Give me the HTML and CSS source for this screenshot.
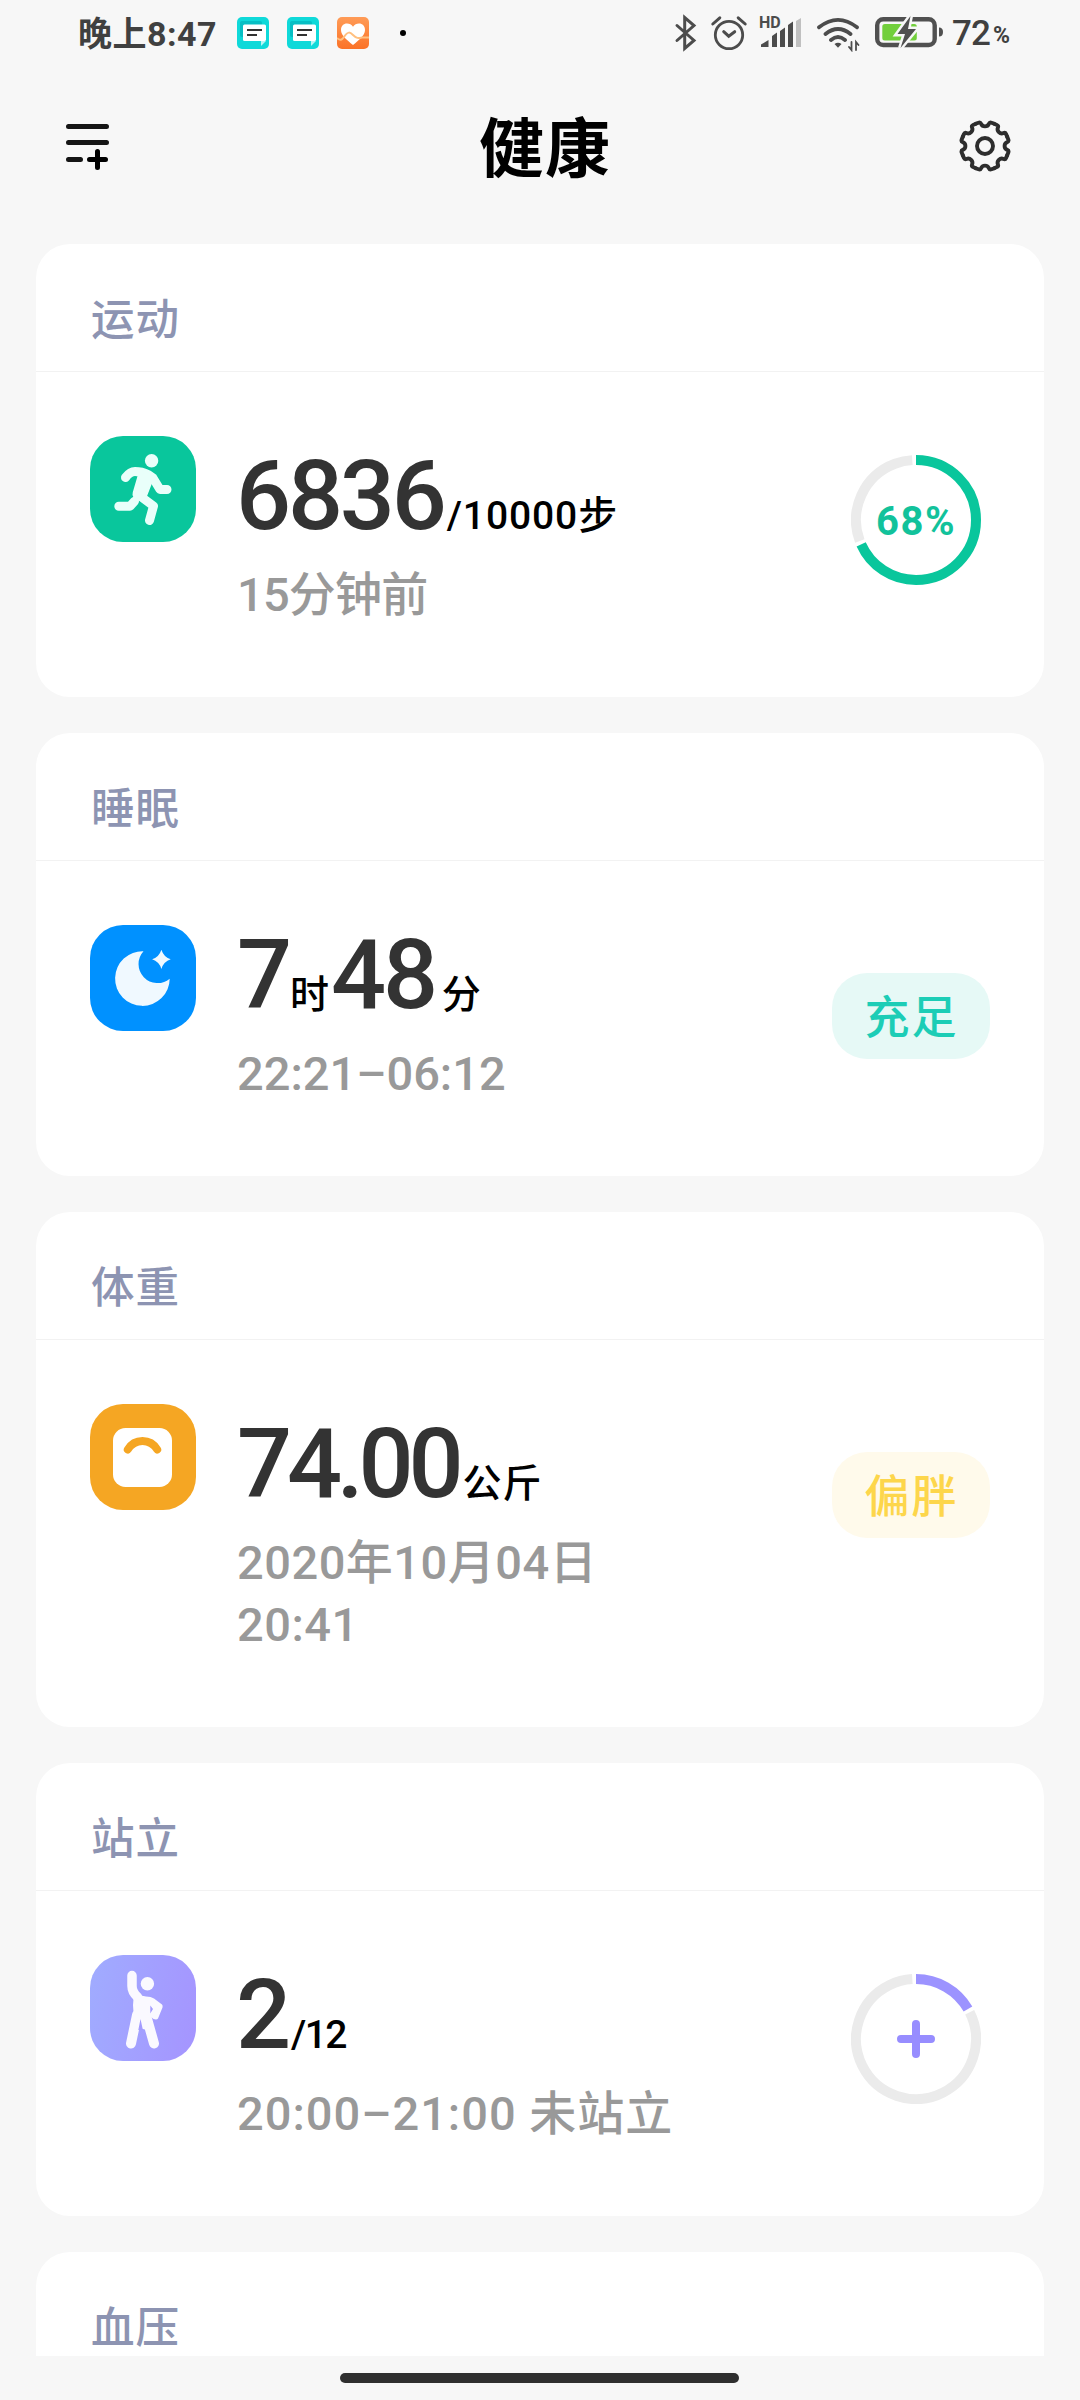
FILE: index.html
```html
<!DOCTYPE html>
<html lang="zh-CN">
<head>
<meta charset="utf-8">
<title>健康</title>
<link rel="stylesheet" href="styles.css">
</head>
<body>
<svg class="defs" width="0" height="0">
  <defs>
    <symbol id="message" viewBox="0 0 32 32">
      <rect width="32" height="32" rx="5" fill="#0fd9d9"/>
      <rect x="3" y="4" width="22" height="16" rx="2" fill="#07bfc4"/>
      <path d="M24 24h5l-5 5z" fill="#b8f4f4"/>
      <rect x="6" y="7.500" width="23" height="16.500" rx="1.500" fill="#fff"/>
      <path d="M10 13h15M10 18h10" stroke="#333" stroke-width="2"/>
    </symbol>
    <path id="tooth" d="M-9.200-22.200-6.500-23.300Q-4.700-24-3.900-22.200-2.900-19.600 0-19.600 2.900-19.600 3.900-22.200 4.700-24 6.500-23.300L9.200-22.200"/>
  </defs>
</svg>
<div class="screen">
  <div class="status">
    <span class="time">晚上8:47</span>
    <span class="notices">
      <svg width="32" height="32"><use href="#message"/></svg>
      <svg width="32" height="32"><use href="#message"/></svg>
      <svg width="32" height="32" viewBox="0 0 32 32">
        <defs><linearGradient id="orange" x2="0" y2="1"><stop stop-color="#ff9b57"/><stop offset="1" stop-color="#fb7227"/></linearGradient></defs>
        <rect width="32" height="32" rx="5" fill="url(#orange)"/>
        <path d="M16 28C10 23 4 18.500 4 13c0-4 2.500-6.500 6-6.500 2.500 0 4.500 1 6 3.200 1.500-2.200 3.500-3.200 6-3.200 3.500 0 6 2.500 6 6.500 0 5.500-6 10-12 15z" fill="#fff"/>
        <path d="M0 21c3 3 5 2 7-1 4-6 6-5 9-2 4 4 6 3 9 2.500h7" fill="none" stroke="#ffc080" stroke-width="2"/>
      </svg>
    </span>
    <span class="dot"></span>
    <span class="system">
      <svg width="24" height="38" viewBox="0 0 24 38"><path d="M3 11.500 20 26.500 10.700 34.500V3.500L20 11.500 3 26.500" fill="none" stroke="#4c4c4c" stroke-width="3" stroke-linecap="round"/></svg>
      <svg class="alarm" width="40" height="38" viewBox="0 0 40 38" fill="none" stroke="#4c4c4c" stroke-width="2.800" stroke-linecap="round"><circle cx="20" cy="21" r="13.700"/><path d="m14.700 17.700 5 4.500 6-4.500" stroke-width="3"/><path d="m3.800 10 7-6.200M29.200 3.800l7 6.200" stroke-width="3"/></svg>
      <svg class="signal" width="44" height="38" viewBox="0 0 44 38" fill="#4c4c4c"><text x="0" y="13.500" font-size="16" font-weight="700">HD</text><path d="M2 33v-2.500L9.500 26v7zM13 33V22l5-3.500V33zM21 33V17l5-3.500V33zM29 33V11l5-3.500V33z"/><path d="M37 33V7l5-3v29z" fill="#c0c0c0"/></svg>
      <svg class="wifi" width="46" height="38" viewBox="0 0 46 38" fill="none" stroke="#4c4c4c" stroke-width="3.800" stroke-linecap="round"><path d="M4 13.300Q23-1.500 42 13.300M10.500 20Q23 10 35.500 20M16 26Q23 20 30 26"/><path d="M19.500 30q3.500-2.500 7 0L23 33.700z" fill="#4c4c4c" stroke="none"/><path d="M36.500 28v8l-2.500-3M41 36v-8l2.500 3" stroke-width="1.800"/></svg>
      <svg class="battery" width="72" height="36" viewBox="0 0 72 36"><rect x="4.200" y="4.200" width="57.500" height="25.800" rx="6" fill="none" stroke="#505050" stroke-width="4.400"/><rect x="9.300" y="9" width="34.500" height="16.500" rx="2.500" fill="#72cf3c"/><path d="M66 12.500q4 0 4 4.500t-4 4.500z" fill="#505050"/><path d="M37.500 1 24.500 19h7.500l-4.500 14L43 14h-8z" fill="#505050" stroke="#f7f7f7" stroke-width="5" paint-order="stroke"/></svg>
      <span class="level">72</span><span class="percent">%</span>
    </span>
  </div>

  <header class="appbar">
    <svg width="46" height="50" viewBox="0 0 46 50" fill="none" stroke="#151515" stroke-width="5" stroke-linecap="round"><path d="M4.500 4.500h38M4.500 20.500h38M4.500 37.500h12"/><path d="M25.500 37.500H41.500M33.500 29.500v16" stroke="#000"/></svg>
    <h1 class="title">健康</h1>
    <svg class="gear" width="52" height="52" viewBox="-26 -26 52 52" fill="none" stroke="#2d2d2d" stroke-width="3.900" stroke-linecap="round">
      <circle r="8"/>
      <use href="#tooth"/><use href="#tooth" transform="rotate(45)"/><use href="#tooth" transform="rotate(90)"/><use href="#tooth" transform="rotate(135)"/><use href="#tooth" transform="rotate(180)"/><use href="#tooth" transform="rotate(225)"/><use href="#tooth" transform="rotate(270)"/><use href="#tooth" transform="rotate(315)"/>
    </svg>
  </header>

  <main class="cards">
    <section class="card">
      <h2 class="card-title">运动</h2>
      <div class="card-body">
        <svg class="badge badge-green" viewBox="0 0 106 106" fill="none" stroke="#e9fffa" stroke-width="9" stroke-linecap="round" stroke-linejoin="round">
          <circle cx="61.600" cy="24.700" r="6.700" fill="#e9fffa" stroke="none"/>
          <path d="M35.500 41.500Q40 35.500 45 35.500 52 35.500 58 38.500L63 42 70 53.500H77"/>
          <path d="m54 41-5 17" stroke-width="13"/>
          <path d="M58 41 51 59" stroke-width="12"/>
          <path d="m50 60 13.500 10-4 14.500"/>
          <path d="M28.800 70.300H40l4.500-5"/>
        </svg>
        <div class="info">
          <div class="value"><span class="num">6836</span><span class="unit unit-steps">/10000步</span></div>
          <p class="note note-ago">15分钟前</p>
        </div>
        <div class="ring">
          <svg width="130" height="130" viewBox="-65 -65 130 130" fill="none" stroke-width="10">
            <circle r="60" pathLength="360" transform="rotate(-90)" stroke="#09c69c" stroke-dasharray="246 360"/>
            <circle r="60" pathLength="360" transform="rotate(159.500)" stroke="#ebebeb" stroke-dasharray="107 360"/>
          </svg>
          <span class="ring-label">68%</span>
        </div>
      </div>
    </section>

    <section class="card card-short">
      <h2 class="card-title">睡眠</h2>
      <div class="card-body">
        <svg class="badge badge-blue" viewBox="0 0 106 106" fill="#f0f9ff">
          <path d="M53.500 26.300A27.300 27.300 0 1 0 79.700 53.700 19 19 0 0 1 53.500 26.300z"/>
          <path d="M71.400 24.700q2.300 7.300 9.300 9.600-7 2.300-9.300 9.600-2.300-7.300-9.300-9.600 7-2.300 9.300-9.600z"/>
        </svg>
        <div class="info">
          <div class="value"><span class="num num-hour">7</span><span class="unit unit-hour">时</span><span class="num">48</span><span class="unit unit-minute">分</span></div>
          <p class="note note-range">22:21–06:12</p>
        </div>
        <span class="pill pill-good">充足</span>
      </div>
    </section>

    <section class="card card-tall">
      <h2 class="card-title">体重</h2>
      <div class="card-body">
        <svg class="badge badge-orange" viewBox="0 0 106 106">
          <rect x="23" y="24" width="59" height="59" rx="12.500" fill="#fff"/>
          <path d="M37.800 45.500Q43 37 52.500 37T67.200 45.500" fill="none" stroke="#f5a623" stroke-width="8" stroke-linecap="round"/>
        </svg>
        <div class="info">
          <div class="value"><span class="num num-weight">74.00</span><span class="unit unit-weight">公斤</span></div>
          <p class="note">2020年10月04日 20:41</p>
        </div>
        <span class="pill pill-warn">偏胖</span>
      </div>
    </section>

    <section class="card">
      <h2 class="card-title">站立</h2>
      <div class="card-body">
        <svg class="badge badge-violet" viewBox="0 0 106 106" fill="#faf9ff" stroke="#faf9ff" stroke-linecap="round" stroke-linejoin="round">
          <circle cx="57.400" cy="28.700" r="6.700" stroke="none"/>
          <path d="M42 20.500V31q0 6 5.500 11" fill="none" stroke-width="9.500"/>
          <path d="M44 38q5 3 12 3.500 5 0 8 2l8 6q1 1 .5 3l-4.500 11q-1 1.500-4.500 .5L60 61l2 15-18-4q0-10-1-22z" stroke="none"/>
          <path d="M47 60 41 88.500M56 60l8 28.500" fill="none" stroke-width="10"/>
          <path d="m50.500 64-2.200 11h4.600zM60.300 50.500v8l2.700-4.500z" fill="#a39bff" stroke="none"/>
        </svg>
        <div class="info">
          <div class="value"><span class="num">2</span><span class="unit unit-stand">/12</span></div>
          <p class="note note-stand">20:00–21:00 未站立</p>
        </div>
        <div class="ring">
          <svg width="130" height="130" viewBox="-65 -65 130 130" fill="none" stroke-width="10">
            <circle r="60" pathLength="360" transform="rotate(-90)" stroke="#9c93ff" stroke-dasharray="60 360"/>
            <circle r="60" pathLength="360" transform="rotate(-26.500)" stroke="#ebebeb" stroke-dasharray="293 360"/>
            <path d="M-15 0h30M0-15v30" stroke="#978dff" stroke-width="8" stroke-linecap="round"/>
          </svg>
        </div>
      </div>
    </section>

    <section class="card">
      <h2 class="card-title">血压</h2>
    </section>
  </main>
  <div class="navbar"><span class="home"></span></div>
</div>
</body>
</html>
```
FILE: styles.css
```css
* { box-sizing: border-box; }
body {
  margin: 0;
  background: #f7f7f7;
  font-family: Roboto, "Noto Sans CJK SC", sans-serif;
  font-weight: 500;
}
h1, h2, p { margin: 0; }
svg { display: block; flex: none; }
.defs { position: absolute; }

.screen {
  width: 1080px;
  height: 2400px;
  display: flex;
  flex-direction: column;
  overflow: hidden;
}

/* status bar */
.status {
  height: 66px;
  flex: none;
  display: flex;
  align-items: center;
  padding: 0 67px 0 78px;
  color: #404040;
}
.time {
  width: 159px;
  padding-top: 2px;
  font-size: 34px;
  font-weight: 700;
  line-height: 40px;
  letter-spacing: 0.5px;
  white-space: nowrap;
}
.notices { display: flex; gap: 18px; }
.dot {
  width: 6px;
  height: 6px;
  margin-left: 31px;
  border-radius: 50%;
  background: #000;
}
.system {
  flex: 1;
  display: flex;
  align-items: center;
  justify-content: flex-end;
}
.system .alarm { margin-left: 11px; }
.system .signal { margin-left: 10px; font-family: Roboto, sans-serif; }
.system .wifi { margin-left: 12px; }
.system .battery { margin-left: 12px; }
.level { width: 41px; margin-left: 7px; padding-top: 1px; font-size: 35px; line-height: 40px; letter-spacing: -1px; }
.percent { width: 20px; font-size: 23px; font-weight: 700; line-height: 30px; padding-top: 6px; height: 36px; }

/* app bar */
.appbar {
  height: 162px;
  flex: none;
  display: flex;
  align-items: center;
  padding: 0 69px 0 64px;
}
.title {
  margin-left: 369px;
  padding-top: 6px;
  font-size: 65px;
  font-weight: 700;
  letter-spacing: 1px;
  line-height: 90px;
  color: #000;
}
.gear { margin-left: auto; margin-bottom: 3px; }

/* cards */
.cards {
  flex: 1;
  min-height: 0;
  overflow: hidden;
  display: flex;
  flex-direction: column;
  gap: 36px;
  padding: 16px 36px 0;
}
.card {
  flex: none;
  height: 453px;
  border-radius: 34px;
  background: #fff;
}
.card-short { height: 443px; }
.card-tall { height: 515px; }
.card-title {
  height: 128px;
  padding: 26px 55px 0;
  border-bottom: 1px solid #f2f2f2;
  font-size: 43.5px;
  font-weight: 500;
  letter-spacing: 1px;
  line-height: 101px;
  color: #8d94b2;
}
.card-body {
  display: flex;
  align-items: flex-start;
  padding: 64px 54px 0;
}
.badge { width: 106px; height: 106px; border-radius: 33px; }
.badge-green { background: #09c69c; }
.badge-blue { background: #0091ff; }
.badge-orange { background: #f5a623; }
.badge-violet { background: linear-gradient(100deg, #a0acff, #a594ff); }

.info { width: 470px; padding-top: 10px; margin-left: 39px; }
.card-short .info { padding-top: 0; }
.value {
  display: flex;
  align-items: baseline;
  height: 100px;
  padding-left: 1px;
  white-space: nowrap;
}
.num { font-size: 97px; line-height: 100px; letter-spacing: -3.2px; color: #333; }
.num-hour { padding-left: 1px; }
.num-weight { padding-left: 1px; letter-spacing: -5.2px; }
.unit { font-size: 39px; line-height: 60px; color: #000; }
.unit-steps { margin-left: 3px; letter-spacing: 0.9px; }
.unit-hour { margin: 0 2px 0 1px; }
.unit-minute { margin-left: 7px; }
.unit-weight { margin-left: 4px; letter-spacing: 1px; }
.unit-stand { margin-left: 3px; letter-spacing: -1.5px; }
.note {
  margin-top: 18px;
  padding-left: 2px;
  font-size: 47px;
  line-height: 62px;
  letter-spacing: 0.5px;
  color: #999;
}
.note-ago { letter-spacing: -0.8px; }
.note-range { letter-spacing: 0; }
.note-stand { letter-spacing: 1px; }

.ring {
  display: grid;
  place-items: center;
  width: 130px;
  margin: 19px 9px 0 auto;
}
.ring > * { grid-area: 1 / 1; }
.ring-label { padding-top: 3px; font-size: 40px; font-weight: 700; line-height: 50px; letter-spacing: 1.5px; color: #12c29b; }

.pill {
  width: 158px;
  height: 86px;
  margin: 48px 0 0 auto;
  padding-top: 4px;
  border-radius: 35px;
  font-size: 45px;
  line-height: 84px;
  letter-spacing: 2px;
  text-indent: 1px;
  text-align: center;
}
.pill-good { background: #e6f9f6; color: #1ccdb6; }
.pill-warn { background: #fffaeb; color: #fdd64b; }

/* gesture bar */
.navbar { height: 44px; flex: none; display: flex; justify-content: center; padding: 17px 1px 0 0; }
.home { width: 399px; height: 10px; border-radius: 5px; background: #2f2f2f; }
```
